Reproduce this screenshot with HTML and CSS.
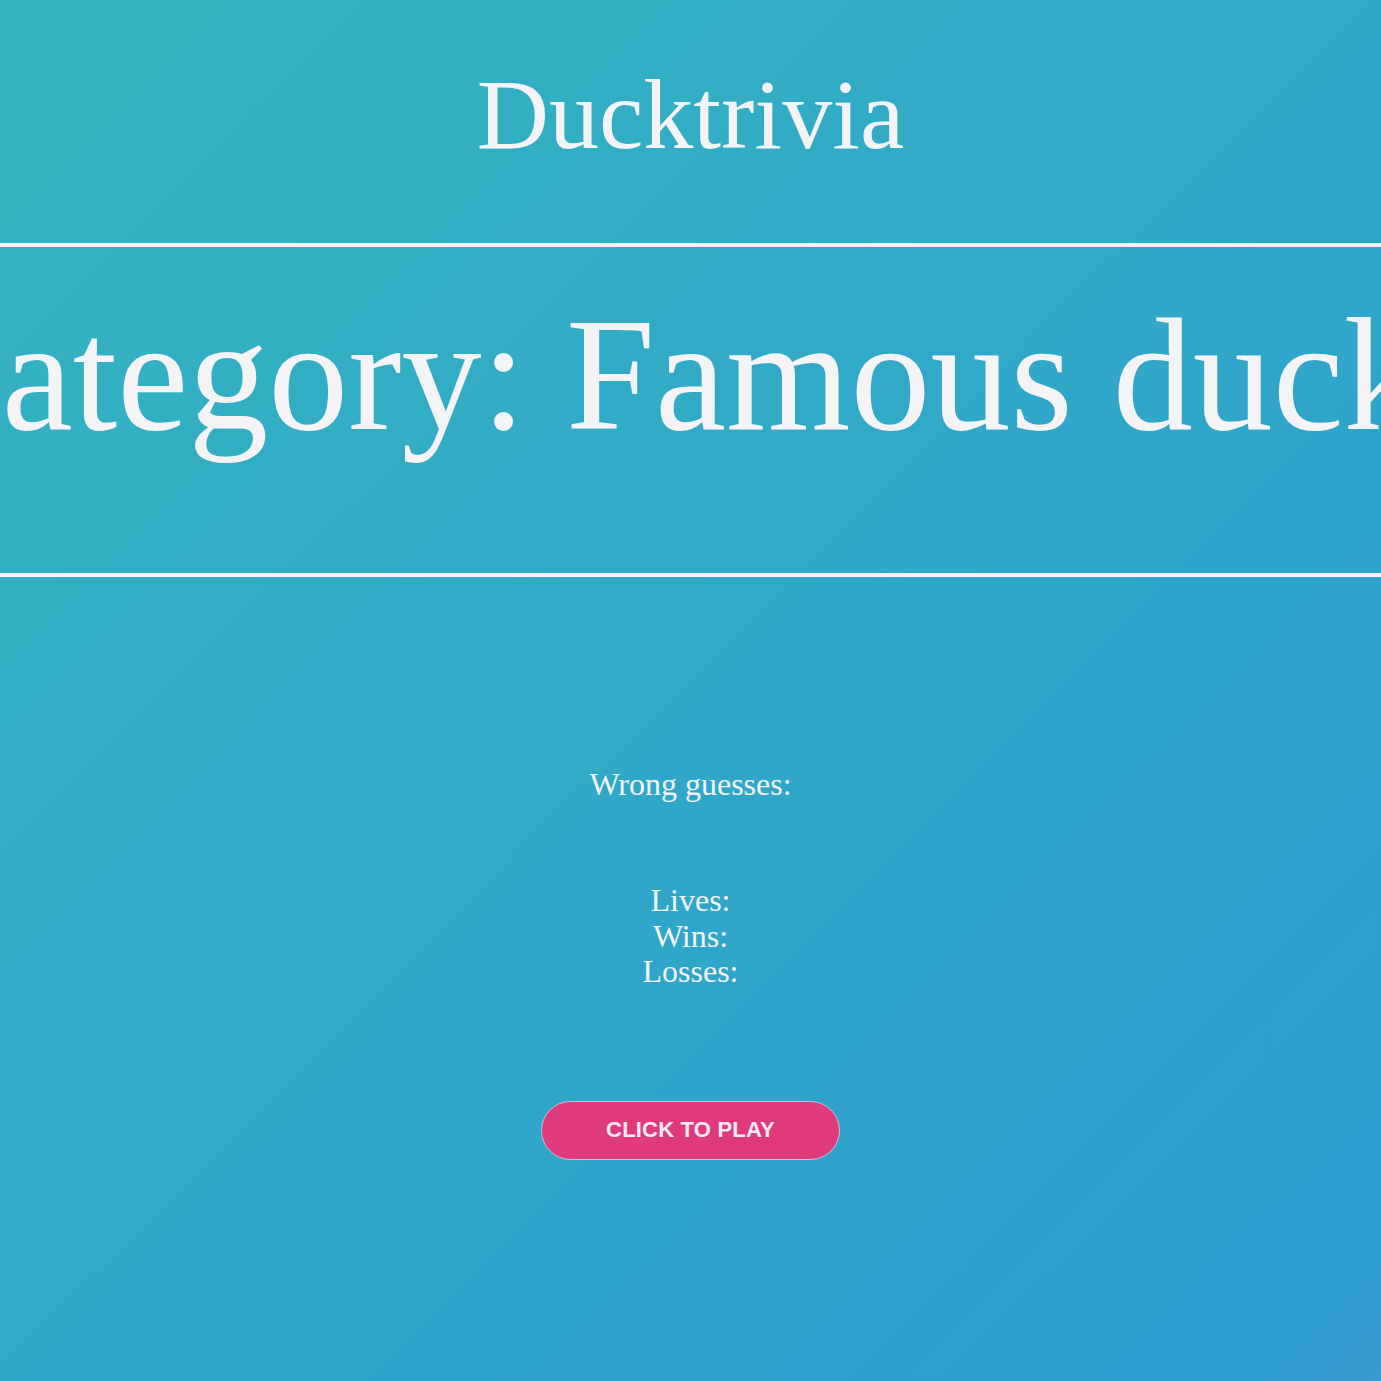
FILE: index.html
```html
<!DOCTYPE html>
<html lang="en">
<head>
<meta charset="utf-8">
<title>Ducktrivia</title>
<link rel="stylesheet" href="styles.css">
</head>
<body>
<div class="page">
  <header class="header">
    <h1 class="title">Ducktrivia</h1>
  </header>
  <section class="category">
    <h2 class="category-text">Category: Famous ducks</h2>
  </section>
  <main class="game">
    <div class="wrong">Wrong guesses:</div>
    <div class="stats">
      <div class="stat">Lives:</div>
      <div class="stat">Wins:</div>
      <div class="stat">Losses:</div>
    </div>
    <button class="play">CLICK TO PLAY</button>
  </main>
</div>
</body>
</html>
```
FILE: styles.css
```css
html, body {
  margin: 0;
  padding: 0;
  height: 100%;
}
body {
  background: linear-gradient(to bottom right, #34b4bf 0%, #30a7c9 55%, #2e9dd1 95%, #3a9bd0 100%);
  color: #f4f4f6;
  font-family: "Liberation Serif", "Times New Roman", serif;
  overflow: hidden;
}
.page {
  min-height: 1381px;
  display: flex;
  flex-direction: column;
}
.header {
  padding-top: 65px;
  height: 247px;
  box-sizing: border-box;
  border-bottom: 4px solid #f4f6f8;
}
.title {
  margin: 0;
  font-size: 100px;
  line-height: 100px;
  font-weight: normal;
  text-align: center;
}
.category {
  border-bottom: 4px solid #f4f6f8;
  height: 330px;
  box-sizing: border-box;
  padding-top: 36px;
  display: flex;
  justify-content: center;
  overflow: visible;
}
.category-text {
  margin: 0;
  flex: none;
  white-space: nowrap;
  font-size: 160px;
  line-height: 184px;
  font-weight: normal;
}
.game {
  display: flex;
  flex-direction: column;
  align-items: center;
  padding-top: 189px;
}
.wrong {
  font-size: 32px;
  line-height: 36px;
}
.stats {
  margin-top: 81px;
  display: flex;
  flex-direction: column;
  align-items: center;
}
.stat {
  font-size: 32px;
  line-height: 35.5px;
}
.play {
  margin-top: 111px;
  width: 299px;
  height: 59px;
  border-radius: 30px;
  border: 1.5px solid #cdbcd6;
  background: #df3a7b;
  color: #fcebf3;
  font-family: "Liberation Sans", Arial, sans-serif;
  font-weight: bold;
  font-size: 22px;
  letter-spacing: 0.2px;
  padding: 0;
  cursor: pointer;
}
```
